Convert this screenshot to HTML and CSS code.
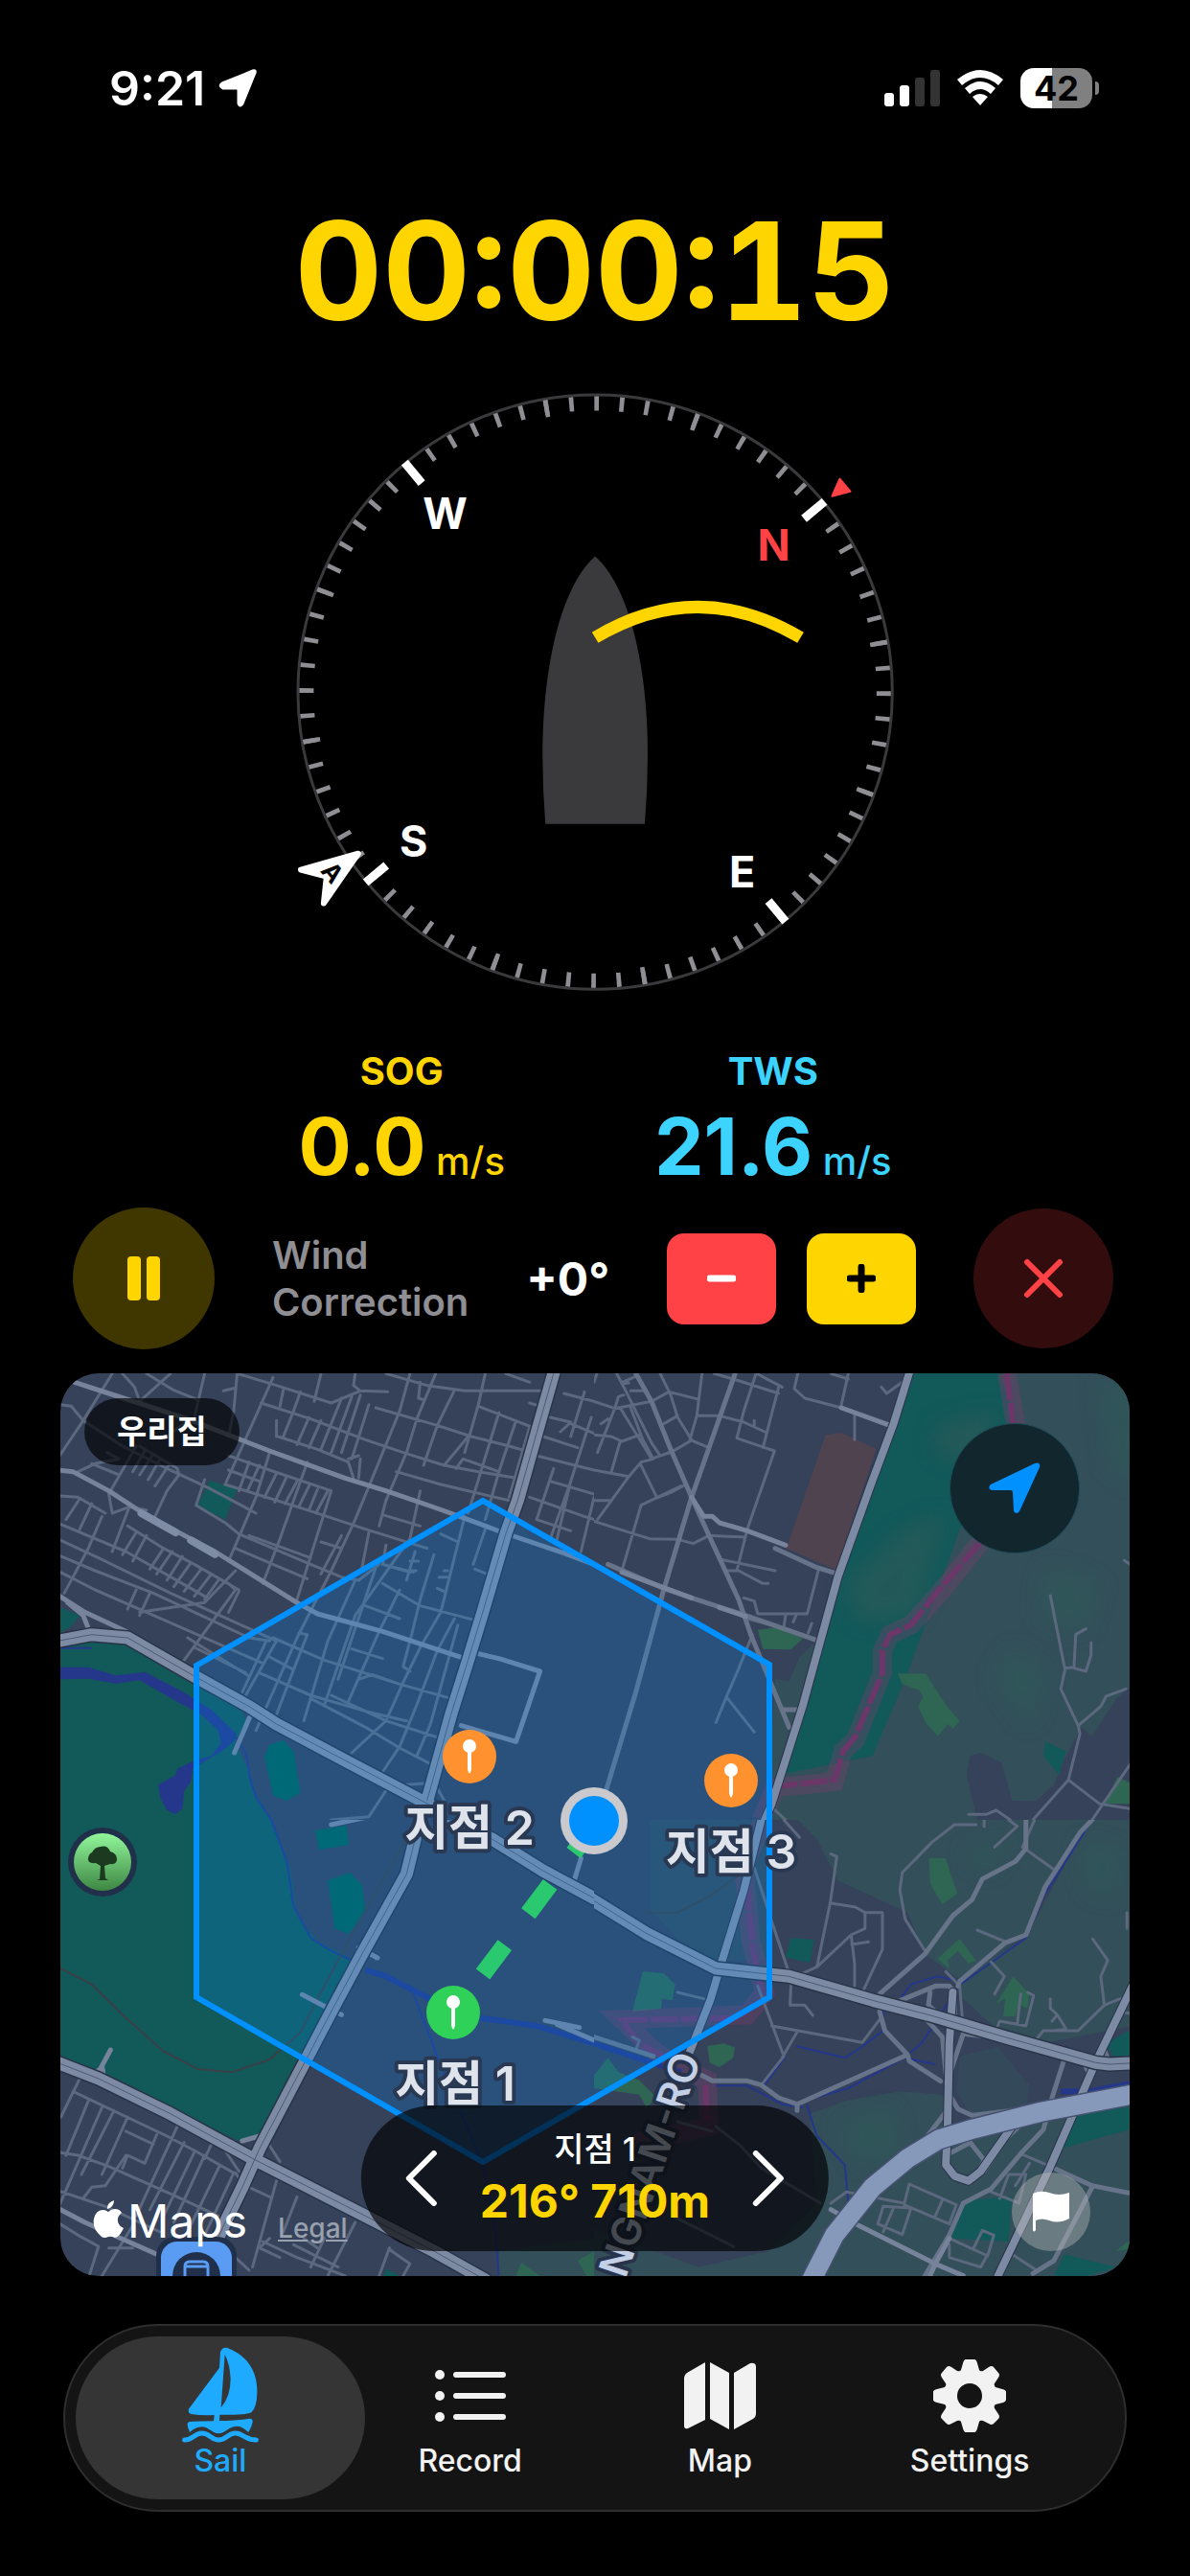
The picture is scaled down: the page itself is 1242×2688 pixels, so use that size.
FILE: index.html
```
<!DOCTYPE html>
<html lang="ko">
<head>
  <meta charset="UTF-8" />
  <meta name="viewport" content="width=device-width, initial-scale=1.0"/>
  <title>Sail</title>
  <link rel="stylesheet" href="styles.css">
</head>
<body>
  <header class="status-bar">
    <div class="status-left">
      <span class="clock">9:21</span>
      <svg class="icon-gps" viewBox="0 0 40 40"><path d="M36 2Q39 1 38 4L25 36Q22.500 40 21 36V22Q21 20 19 20H5Q0 18 4 15Z"/></svg>
    </div>
    <div class="status-right">
      <svg class="icon-signal" viewBox="0 0 58 38">
        <rect x="0" y="24" width="10" height="14" rx="3"/>
        <rect x="16" y="16" width="10" height="22" rx="3"/>
        <rect class="off" x="32" y="8" width="10" height="30" rx="3"/>
        <rect class="off" x="48" y="0" width="10" height="38" rx="3"/>
      </svg>
      <svg class="icon-wifi" viewBox="0 0 50 38">
        <path d="M1 10Q25 -10 49 10L44 16Q25 0 6 16Z"/>
        <path d="M9 19Q25 5 41 19L36 25Q25 15 14 25Z"/>
        <path d="M17 28Q25 22 33 28L25 37Z"/>
      </svg>
      <div class="battery"><span>42</span></div>
    </div>
  </header>

  <main>
    <h1 class="timer">00:00:15</h1>

    <svg class="compass" viewBox="-330 -330 660 660">
      <circle class="ring" r="311"/>
      <g transform="rotate(50.300)">
        <circle class="tick" r="302" pathLength="360" stroke-dasharray="0.900 4.100" stroke-dashoffset="0.450"/>
        <circle class="tick tick-long" r="301" pathLength="360" stroke-dasharray="0.900 29.100" stroke-dashoffset="0.450"/>
        <path class="tick-main" d="M0 -312V-284M0 312V284M-312 0H-284M312 0H284"/>
      </g>
      <path class="boat" d="M0 -142C-38 -108 -55 -20 -55 65Q-55 102 -52 138H52Q55 102 55 65C55 -20 38 -108 0 -142Z"/>
      <path class="wind-arc" d="M0 -57Q107 -121 215 -57"/>
      <path class="north-mark" d="M256 -223L267 -210L248 -205Z"/>
      <text x="-157" y="-171">W</text>
      <text class="north" x="187" y="-138">N</text>
      <text x="-190" y="172">S</text>
      <text x="154" y="204">E</text>
      <path class="wind-mark" d="M-248 169L-308 186L-281 193L-284 221Z"/>
      <text class="wind-letter" transform="translate(-275 189) rotate(50)" y="9">A</text>
    </svg>

    <section class="speeds">
      <div class="speed sog">
        <h2>SOG</h2>
        <p><b>0.0</b> <span>m/s</span></p>
      </div>
      <div class="speed tws">
        <h2>TWS</h2>
        <p><b>21.6</b> <span>m/s</span></p>
      </div>
    </section>

    <section class="controls">
      <button class="round pause" type="button" aria-label="Pause">
        <svg viewBox="0 0 36 46"><rect x="1" width="14" height="46" rx="4"/><rect x="21" width="14" height="46" rx="4"/></svg>
      </button>
      <p class="correction-label">Wind<br>Correction</p>
      <output class="correction">+0°</output>
      <div class="steppers">
        <button class="step minus" type="button" aria-label="Decrease">
          <svg viewBox="0 0 30 30"><path d="M3 15H27"/></svg>
        </button>
        <button class="step plus" type="button" aria-label="Increase">
          <svg viewBox="0 0 30 30"><path d="M3 15H27M15 3V27"/></svg>
        </button>
      </div>
      <button class="round stop" type="button" aria-label="Stop">
        <svg viewBox="0 0 42 42"><path d="M4 4L38 38M38 4L4 38"/></svg>
      </button>
    </section>

    <section class="map">
      <svg class="map-canvas" viewBox="0 0 1116 942" preserveAspectRatio="xMidYMid slice">
        <defs>
          <linearGradient id="treeFill" x1="0" y1="0" x2="0" y2="1">
            <stop offset="0" stop-color="#92f79b"/>
            <stop offset="1" stop-color="#3d8743"/>
          </linearGradient>
          <filter id="soft" x="-50%" y="-50%" width="200%" height="200%"><feGaussianBlur stdDeviation="30"/></filter>
          <g id="pinGlyph">
            <circle cy="-11" r="7"/>
            <path d="M-2 -6H2L2 13Q0 22 -2 13Z"/>
          </g>
        </defs>
        <rect class="land" width="1116" height="942"/>

        <!-- north west tile -->
        <svg x="-3" y="-14" width="560" height="480" viewBox="0 0 1568 1440" preserveAspectRatio="none">
          <path class="park" d="M0 895L100 885L205 890L400 1010L540 1100L552 1130L520 1195L560 1290L575 1350L625 1440H0Z"/>
          <path class="park" d="M445 377L525 405L490 500L410 455ZM0 770L65 800L40 835L0 860Z"/>
          <path class="park-bright" d="M620 1205L660 1190L692 1230L709 1355L670 1380L630 1365L605 1240Z"/>
          <path class="water" d="M0 962L90 962L170 988L255 977L360 1035L450 1095L522 1170L515 1195L480 1225L440 1250L395 1280L390 1320L370 1350L365 1405L345 1422L320 1410L300 1370L295 1330L345 1300L350 1280L400 1255L450 1240L478 1200L470 1160L420 1110L350 1070L240 1003L170 1013L90 998L0 1000Z"/>
          <path class="stream" d="M520 1180Q560 1230 560 1300L580 1370L625 1440M8 902H100"/>
          <g class="streets">
            <path d="M160 43L75 190L0 310M8 140L40 145L75 190M190 43L225 85L240 130L330 43M260 43L340 95L410 125M430 43L400 180M525 43L515 160L500 240M485 97L520 88"/>
            <path d="M75 190L190 270L320 340L440 400L580 480M145 290L180 310L110 325L60 350M100 325L180 360M230 270L155 410M255 285L220 350M280 295L240 360M300 310L265 375M325 330L285 395M240 270L350 340L355 360L320 410L285 490M430 375L405 455L490 510L530 545L740 640L830 680L880 690L940 640M320 240L380 190"/>
            <path d="M630 55L490 390M660 95L650 145M710 100L690 160M770 43L750 130M525 43L640 80L800 135L885 97L965 100M870 43L865 80L885 97M1030 43L1000 160L920 370L870 500L800 660L700 870L580 1160"/>
            <path d="M595 135L740 185L900 250L1010 290L1130 330L1230 350L1340 370M645 240L760 280L850 320M830 120L770 280M860 115L800 290M885 110L830 290M910 140L860 310M690 160L660 240M735 180L700 265M770 190L735 275M640 190L640 240"/>
            <path d="M930 150L1110 205L1210 240L1320 270L1385 290M960 43L1080 80L1190 97H1410M1060 70L1055 120L1070 125M1105 43L1050 185L1020 290L960 440M1160 95L1110 205L1070 330M1250 43L1230 140L1190 290M1230 145L1385 210M1310 43L1380 70M1290 165L1240 340L1200 480M1340 190L1290 350L1250 500M1380 210L1320 430"/>
            <path d="M1200 240L1130 330M1165 340L1185 310L1290 350M500 345L590 380M500 300L620 345L800 410M490 390L730 470L900 530L1080 590M560 320L530 410M590 330L555 410M640 355L605 430M670 365L635 445M700 380L665 450M735 395L705 460M760 405L735 470M790 410L755 480M620 290L580 430L500 630M850 320L865 370M885 310L880 370M880 300L850 310"/>
            <path d="M730 320L650 560L600 700M800 410L700 750M990 350L1120 390L1320 440M950 485L1060 520M1060 410L1030 560L870 800L780 1080M770 570L830 590M520 590L630 640L730 685M560 550L740 620M830 550L770 670M910 540L890 650M960 580L950 640L1030 665M960 440L940 520"/>
            <path d="M0 425L60 430L140 480M65 435L25 500M100 450L65 530M0 510L200 600L430 740M150 420L160 480L210 460L260 470M210 460L160 600M130 490L90 590L20 730M205 520L250 550L310 590L400 640L530 720M230 540L190 610M260 550L220 630M310 590L270 655M335 600L290 670M365 615L320 690M390 635L340 710M420 655L370 725M450 670L400 740M470 690L430 750M500 700L520 720L370 940M530 725L500 790"/>
            <path d="M0 560L120 620L330 730L640 880M0 610L110 660L280 730L560 870L620 880M0 660L110 720L260 790L600 950M270 730L240 800M230 720L205 780M520 660L430 760L240 790M380 870L560 990M400 900L550 980"/>
            <path d="M610 880L540 1040M640 880L550 1050M620 930L690 970M590 980L740 1050L900 1100L1020 1130M630 870L780 940L1000 1015L1150 1060M705 855L730 860L690 970L640 1110M950 640L1040 665M950 700L1060 770L1220 815M1190 490L1120 790L1060 900L1010 1010L960 1130L860 1230M1000 720L940 850L850 1070M900 770L1000 810M860 905L950 935M1100 610L1060 750L1035 860L1010 960L1030 975M1045 600L1020 690M870 690L790 880L720 1130M1160 810L1110 910L1050 1080L1000 1210L950 1290M880 1000L920 985L1000 1015M800 1050L900 1100L960 1130L1120 1185M740 1060L900 1150L1000 1215L1100 1270M1250 530L1215 640M1220 655L1255 670M1170 830L1090 1140L1050 1240M1120 545L1170 570M1130 660H1140M1115 680H1140M1110 715L1130 725M1030 630H1055M1020 660H1048M930 650L820 1000"/>
            <path d="M1440 180L1500 195L1470 225M1420 240L1520 275M1568 130L1480 105M1568 230L1500 200M1540 100L1500 240M1400 300L1568 345M1560 180L1500 380L1460 560M1440 380L1568 420M1380 430L1540 490L1568 500M1400 500L1500 535M1450 340L1400 500M1500 380L1440 560M1568 430L1530 600M1380 135L1410 145"/>
            <path d="M965 1340L910 1430L800 1440M1020 1330L1080 1325M1110 1340L1130 1380"/>
          </g>
          <g class="avenues">
            <path d="M50 70L150 105L380 185L620 285L840 370L960 410L1110 465L1200 500L1300 540L1480 605L1568 640"/>
            <path d="M0 345L45 350L150 410L250 480L345 535L460 600L700 760L760 795M1230 920L1290 935L1410 975L1340 1195L1180 1145M565 1110L517 1230M0 735L80 790L200 850M30 760L75 800L90 840"/>
            <path d="M760 795L950 850L1190 935"/>
          </g>
          <path class="lane-wide" d="M245 480L345 540M390 565L460 608"/>
          <g class="major-case"><path id="nwA" d="M1453 30L1400 230L1345 440L1310 545L1240 800L1200 940L1150 1110L1080 1380"/><path id="nwB" d="M0 880L100 860L205 870L400 990L560 1085L640 1140L860 1265L1100 1400"/></g>
          <g class="major"><use href="#nwA"/><use href="#nwB"/></g>
          <g class="divider"><use href="#nwA"/><use href="#nwB"/></g>
        </svg>

        <!-- north east tile -->
        <svg x="557" y="-14" width="570" height="480" viewBox="0 0 1568 1440" preserveAspectRatio="none">
          <path class="hill" d="M900 43H1568V1440H490L500 1330L520 1000L560 1005L590 930L640 880Z"/>
          <path class="park" d="M900 43H1160L1215 180L1050 530L950 830L900 980L800 1240L530 1300L600 1080L700 680L800 350Z"/>
          <g class="hill-shade" filter="url(#soft)">
            <path d="M900 520L1010 480L930 800L760 820L720 700Z"/><path d="M980 200L1160 150L1120 340L980 300Z"/>
            <path d="M1450 60L1568 90V400L1480 330ZM1300 640L1450 700L1400 860L1280 800ZM1200 900L1300 980L1250 1150L1150 1000Z"/>
          </g>
          <path class="land" d="M1080 1240L1110 1230L1170 1260L1200 1380L1270 1380L1320 1330L1350 1250L1400 1150L1430 1180L1500 1060L1568 1000V1440H1100L1070 1300Z"/>
          <path class="grass" d="M470 845L520 838L600 872L565 907L485 905ZM872 982H952L1010 1080L1050 1130L1030 1155L1015 1140L988 1178L955 1140L930 1085L945 1055L935 1035L885 1015ZM1503 1305L1568 1340V1390H1465Z"/>
          <path class="park" d="M1295 1195L1355 1225L1335 1300L1290 1240Z"/>
          <path class="school" d="M665 235L710 228L810 278L695 658L552 590Z"/>
          <path class="border-glow" d="M1185 43L1210 200L1110 570L1000 720L910 830L850 860L828 910V980L750 1190L715 1225L690 1320L520 1340L480 1440"/>
          <path class="border-line" d="M1185 43L1203 200M1110 570L990 720L910 830L850 860L828 910V980L750 1180L715 1225L690 1315L520 1335"/>
          <g class="streets">
            <path d="M8 43L0 70M65 43L90 95L165 260L190 300L220 290L280 252L330 275M80 70L125 50M80 75L100 72M105 97H140M0 130L60 152L165 130L215 100L295 122M85 110L70 115L60 150L10 290M75 150L165 310L215 290M20 200L40 185M0 235L50 240L80 255L130 235M75 255L50 350M105 150L140 250L170 310L135 320L100 365L0 345M100 365L10 500M135 330L180 430M190 43L220 110L240 180L280 250M240 175L200 200M310 43L295 175L275 250M295 175H360"/>
            <path d="M360 175L430 195L490 225M345 43L400 60L530 105M465 43L430 160L410 245L490 275L518 285L440 530L410 660M460 190V205M530 85L485 275M585 43L575 90L605 120L710 150L840 205M730 43L708 150M748 165V250M470 45L540 85M680 43L730 60M825 85L840 105L885 70M0 440L45 440M180 432L220 415L255 395M135 455L250 395M135 455L80 660M0 505L115 545L160 560L240 562L285 575L330 550L435 555M365 625L520 660M380 660H415L485 700H500M430 745L460 755L470 795H612L645 655M550 800L545 835M580 800L572 820M625 825L615 855"/>
            <path d="M455 860L410 980L380 1055L350 1135M380 1055L460 1165M510 1400L550 1440M440 810L560 845L640 878M1310 738L1352 970L1340 1030L1390 1145L1395 1170L1362 1315L1260 1440M1352 965L1378 962L1383 860L1412 842M1378 965L1412 975L1427 925V885M1390 1145L1455 1085L1470 1053L1527 1030M1362 1315L1452 1390L1568 1410M1568 1220L1430 1440M1075 1423H1125L1155 1410L1195 1440M1522 628L1568 660"/>
          </g>
          <g class="avenues slim">
            <path d="M120 43L165 130L220 280L280 430L330 550L415 750L450 860L560 1150M405 43L280 430L200 720L120 1040L20 1400M40 640L200 715L280 745L435 800L640 878M520 590L640 650L700 670M545 1095H590"/>
          </g>
          <g class="avenues"><path d="M280 430L315 490H340L360 510L440 535L550 580M80 665L280 745M360 775L435 803M710 150L850 205"/></g>
          <g class="major-case mid"><path id="neA" d="M908 30L860 200L795 390L700 680L600 1080L510 1390L490 1440"/></g>
          <g class="major mid"><use href="#neA"/></g>
        </svg>

        <!-- south west tile -->
        <svg x="-3" y="466" width="560" height="490" viewBox="0 0 1568 1470" preserveAspectRatio="none">
          <path class="park" d="M0 0H625L680 150L700 300L760 380L860 435L800 600L590 990L530 1005L0 740Z"/>
          <path class="park-bright" d="M752 33L845 17L851 78L765 94ZM790 190L855 165L890 205L900 290L850 357L810 340Z"/>
          <path class="hill" d="M1290 1350L1568 1310V1470H1290Z"/>
          <path class="grass" d="M1355 1385L1410 1427L1390 1470L1340 1427ZM1520 1380L1568 1350V1470Z"/>
          <path class="park" d="M960 1405L1000 1427V1470H940Z"/>
          <path class="stream" d="M625 0L670 130L690 270L740 370L800 410L860 440M1040 545L1110 740L1240 1070L1275 1240L1290 1427"/>
          <path class="stream wide" d="M900 470L960 490L1060 545L1090 560M1235 620L1400 645L1568 700"/>
          <path class="rail" d="M0 460L100 515L190 610L310 725L410 780L510 790L620 750L710 665L770 540L890 300L1020 60"/>
          <g class="streets">
            <path d="M65 810L10 930M90 880L25 1050M130 900L0 1220M45 850L320 990L400 1035L515 1105M165 910L70 1110M205 930L130 1110M290 985L255 1075L205 1050L190 1090M200 975L280 1015M350 960L230 1240M370 1010L270 1220M400 1040L310 1240M430 1050L340 1260M475 1080L380 1290M515 1105L430 1300M0 1040L60 1050L150 1085L350 1180L470 1240M0 1160L140 1210L300 1290M75 1185L100 1150L140 1145L200 1050M0 1260L60 1300L120 1335L80 1470M150 1340H220M220 1270L130 1427M450 1015L430 1060M520 1105L530 1120"/>
            <path d="M620 1310L590 1340L650 1370M640 1130L570 1400M560 1150L620 1180M520 1370L560 1410M870 1260L790 1427M690 1330L820 1400M700 1180L660 1290M720 1310L760 1340M780 1310L740 1400M600 1320L700 1370L840 1427M970 1340L940 1427M970 1345L1030 1390L1010 1427M620 1020L650 1070M480 1020L530 1100"/>
          </g>
          <g class="avenues">
            <path d="M155 720L125 780L100 800M130 770L135 800M0 1215L80 1260L290 1360M715 547L800 595L830 610M880 400L935 432M800 15L910 -10M1425 628L1525 650M1530 120L1510 190M1510 0L1530 20M1460 640L1568 690M540 1005L590 990"/>
          </g>
          <g class="major-case"><path id="swA" d="M1045 60L1020 170L890 420L800 600L590 1030L540 1150L490 1260L400 1470"/><path id="swB" d="M0 760L120 810L330 920L570 1060L900 1240L1100 1350L1250 1440"/><path id="swC" d="M1060 -40L1270 60L1420 160L1568 245"/></g>
          <g class="major"><use href="#swA"/><use href="#swB"/><use href="#swC"/></g>
          <g class="divider"><use href="#swA"/><use href="#swB"/><use href="#swC"/></g>
        </svg>

        <!-- south east tile -->
        <svg x="557" y="466" width="570" height="490" viewBox="0 0 1568 1470" preserveAspectRatio="none">
          <path class="hill" d="M585 0H1430L1300 200L1240 360L1050 500L950 420L900 290L700 190L640 60ZM1040 500L1240 370L1420 0H1568V640L1290 700L1150 650L1060 560ZM620 920L720 880L880 850L1000 860L1030 1000L1200 960L1380 880H1568V1470H0V1280L300 1400L500 1350L640 1200Z"/>
          <path class="hill dim" d="M160 0H500V440H300L160 280ZM1050 740L1160 710L1250 830L1240 900L1080 920L1040 850Z"/>
          <g class="hill-shade" filter="url(#soft)"><path d="M700 950L850 900L880 1050L760 1080ZM1400 60L1520 100L1490 250L1420 220ZM1060 100L1200 60L1130 170Z"/></g>
          <path class="grass" d="M962 120H1010L1025 175L1044 230L1000 265L965 200ZM985 435L1050 372L1097 440L1075 450L1045 410L1015 440L1020 465ZM1155 575L1203 490L1250 545L1245 590L1220 580L1210 615H1175L1180 560ZM325 708L372 700L404 712L400 745L360 775L332 760ZM0 800L40 745L70 790L130 815L180 870L150 900L130 860L0 840ZM140 475L200 480L233 515L225 565L195 560L193 592L110 600ZM1568 1290L1497 1350L1568 1340Z"/>
          <path class="park" d="M565 370L632 375L620 447L550 430ZM1370 930L1568 890V960L1340 1030ZM1060 1190L1200 1180L1190 1320L1025 1310ZM1470 700L1568 640V740L1490 740ZM1350 1360L1500 1400L1420 1427H1320Z"/>
          <path class="border-glow" d="M485 0L430 150L450 380L490 540L440 610L80 625L180 730L260 780L325 815L330 960L120 1010"/>
          <path class="border-line" d="M440 200L455 400L485 560L410 620L80 627L130 700L200 740M320 830L325 940"/>
          <path class="stream" d="M1430 0L1290 240L1240 370L1045 520L1000 600L940 700L890 745L980 765M1045 505L985 490L910 515L880 560L830 600V660L770 710L720 745L580 708M600 880L730 840L890 745M610 890L640 990L720 1080L730 1200M350 832H440L540 890L600 900M550 740L490 830"/>
          <path class="stream wide" d="M0 700L110 740L250 790M1340 850H1420L1568 820"/>
          <path class="rail" d="M150 290H240L330 240L420 170"/>
          <g class="streets">
            <path d="M680 107L697 115L678 260L640 460L600 480M678 260L750 273L778 290H828V405L775 530M778 290V340L738 360L640 460M738 360L748 450V520M740 390L788 382M460 150L520 350L560 480M565 520L563 580H605L628 612M470 520L545 740L480 830M510 645L770 697L820 625M585 660L540 745M545 0L590 55M240 540L315 560M110 680L130 690L122 715"/>
            <path d="M1097 15H1035L970 70L885 165L878 220L893 310L950 410M1120 0V20M1190 0L1215 20L1150 85M1265 0L1230 85L1320 155M1100 345L1178 380M1140 445L1178 490L1150 545M1010 475L1050 520L1058 630M1432 373L1475 440L1455 490L1465 580L1390 660H1290L1260 700M1465 580L1510 560M1310 560V590L1330 610L1355 655L1320 660M1330 610L1315 630M1225 545L1215 640L1165 630L1155 655M1245 540L1262 550L1240 645L1215 640M1500 600L1568 610M1530 290V340"/>
            <path d="M350 960L420 1020L480 1090L650 1200M240 945L340 975M225 1240L400 1335M680 1200L725 1165L890 1200M905 1140L1040 1205L1020 1265L890 1205ZM980 1240L1000 1190M830 1210L815 1265L885 1298L910 1215ZM860 1215L830 1290M1130 1160L1220 1200L1240 1110L1190 1110L1165 1185M1225 1045L1310 1085M1250 1075L1210 1145M1020 1310L1130 1365L1148 1300L1115 1285L1090 1340M1020 1330V1370L1110 1400L1130 1360M1200 1360L1270 1410"/>
          </g>
          <g class="avenues slim">
            <path d="M1430 0L1395 40L1295 210L1240 360L1180 385L1050 505L1045 520M1240 90L1210 130L1115 185L1085 250L1030 300L950 420L820 545M1240 0V90M310 800L340 817H440L480 830L530 870L583 890L900 735L905 755L995 818M583 890V910M820 600L835 660L900 735M1350 750L1315 870L1290 970L1225 1045L1140 1155L1060 1200L1020 1300L950 1427M1310 1085L1430 1145L1568 1175M1430 1150L1320 1380L1260 1420"/>
            <path d="M880 565L980 520H1020L1035 540V620M965 540L960 580L1000 620M950 620L1000 680L1015 850L1045 905L1085 925L1200 910M1060 670L1150 680M1060 670L1020 800V900L950 1000L890 1040M1010 1050L1080 1010L1120 1065L1100 1110M1220 960L1180 1000L1120 1100M1400 750L1420 790M1465 720L1480 760M0 680L170 740"/>
          </g>
          <g class="avenues"><path d="M680 1220L760 1270L980 1390L1060 1427M980 1390L1020 1310M965 1427L980 1390"/></g>
          <g class="major-case mid"><path id="seC" d="M480 0L430 220L365 450L335 560L270 740M1568 470L1440 760L1310 1085L1160 1427M1030 540L1020 700L1015 960L1010 1080L1035 1115L1075 1130L1110 1100L1200 960"/></g>
          <g class="major mid"><use href="#seC"/></g>
          <g class="major-case"><path id="seA" d="M-20 240L150 355L350 465L560 490L800 565L960 610L1180 680L1440 760L1480 765L1568 760"/></g>
          <g class="major"><use href="#seA"/></g>
          <g class="divider"><use href="#seA"/></g>
          <path class="motorway-case" d="M1568 855L1280 915L1080 970L990 1000L900 1060L800 1150L690 1300L620 1450"/>
          <path class="motorway" d="M1568 855L1280 915L1080 970L990 1000L900 1060L800 1150L690 1300L620 1450"/>
        </svg>

        <text class="street-name" transform="translate(669 715) rotate(-71)">NGNAM-RO</text>
        <path class="zone" d="M441 133L740 304V651L441 823L142 651V305Z"/>
        <path class="course" d="M441 627L557 472"/>

        <g class="place" transform="translate(44 510)">
          <circle class="place-ring" r="36"/>
          <circle r="30" fill="url(#treeFill)"/>
          <path d="M-3 18L-2 4L-7 1Q-16 2 -15 -4Q-14 -9 -11 -10Q-8 -16 -2 -16Q5 -18 8 -11Q15 -9 15 -3Q15 3 8 2L2 4L3 17L6 19H-6Z"/>
        </g>
        <g transform="translate(142 942)">
          <rect class="shop-ring" x="-42" y="-41" width="84" height="84" rx="20"/>
          <rect class="shop" x="-37" y="-36" width="74" height="74" rx="17"/>
          <circle class="shop-ring" r="25"/>
          <path class="shop-phone" d="M-12 8V-10Q-12 -15 -7 -15H7Q12 -15 12 -10V8M-12 -10H12"/>
        </g>

        <g class="pin next" transform="translate(410 667)"><circle r="28"/><use href="#pinGlyph"/><text x="2" y="92">지점 1</text></g>
        <g class="pin" transform="translate(427 400)"><circle r="28"/><use href="#pinGlyph"/><text y="92">지점 2</text></g>
        <g class="pin" transform="translate(700 425)"><circle r="28"/><use href="#pinGlyph"/><text y="92">지점 3</text></g>
        <circle class="me-ring" cx="557" cy="467" r="35"/>
        <circle class="me" cx="557" cy="467" r="26"/>
      </svg>

      <div class="map-title">우리집</div>
      <button class="locate" type="button" aria-label="Locate">
        <svg viewBox="0 0 54 54"><path d="M48 1Q54 -1 53 5L32 51Q29 55 26 51L25 31Q25 29 23 29H3Q-2 27 2 23Z"/></svg>
      </button>
      <div class="map-credit">
        <svg viewBox="0 0 32 40"><path d="M22 1Q22 8 15 10Q14 4 22 1ZM16 13Q19 10 23 10Q28 10 30 14Q25 18 26 23Q27 28 32 30Q28 39 23 40Q20 38 16 39Q12 41 9 39Q-1 31 1 20Q3 11 11 11Q13 11 16 13Z"/></svg>
        <span>Maps</span>
        <a href="#legal">Legal</a>
      </div>
      <div class="waypoint">
        <button type="button" aria-label="Previous"><svg viewBox="0 0 34 58"><path d="M30 3L4 29L30 55"/></svg></button>
        <div class="waypoint-info">
          <span>지점 1</span>
          <strong>216° 710m</strong>
        </div>
        <button type="button" aria-label="Next"><svg viewBox="0 0 34 58"><path d="M4 3L30 29L4 55"/></svg></button>
      </div>
      <button class="flag" type="button" aria-label="Flag">
        <svg viewBox="0 0 40 44"><path d="M1 3Q9 -1 18 2Q28 6 39 2V29Q28 35 18 31Q10 28 4 31V41Q2 44 1 41Z"/></svg>
      </button>
    </section>
  </main>

  <nav class="tabs">
    <a class="active" href="#sail">
      <svg viewBox="388 96 240 298">
        <path d="M508 110Q515 94 530 98C600 125 625 180 623 240Q622 285 605 300Q590 309 506 307L505 326Q570 325 600 319Q610 319 609 330Q607 345 596 362Q570 338 550 345C530 350 520 366 502 366C484 366 470 345 450 345Q430 346 412 362Q404 345 405 334Q407 328 420 328L487 327L489 308Q450 310 416 305Q404 300 410 288L505 160ZM522 118L510 285Q540 250 540 195Q538 150 522 118Z"/>
        <path class="wave" d="M396 386C425 386 425 365 450 365C475 365 480 386 502 386C528 386 530 365 555 365C580 365 585 386 620 386"/>
      </svg>
      <span>Sail</span>
    </a>
    <a href="#record">
      <svg viewBox="0 0 80 80">
        <circle cx="8" cy="20" r="5"/><circle cx="8" cy="42" r="5"/><circle cx="8" cy="64" r="5"/>
        <path class="lines" d="M25 20H74M25 42H74M25 64H74"/>
      </svg>
      <span>Record</span>
    </a>
    <a href="#map">
      <svg viewBox="0 0 80 80">
        <path d="M3 23Q3 20 6 18L25 7V67L7 76Q3 77 3 73ZM30 7L50 18V77L30 66ZM55 18L72 8Q78 7 78 12V61Q78 64 75 66L55 77Z"/>
      </svg>
      <span>Map</span>
    </a>
    <a href="#settings">
      <svg viewBox="0 0 80 80">
        <path fill-rule="evenodd" d="M33 8Q34 4 36 4H45Q47 4 48 8L50 15Q51 17 54 16L60 12Q63 10 65 12L70 18Q72 20 70 23L66 29Q65 31 67 33L74 35Q78 36 78 38V46Q78 48 75 49L67 51Q65 52 66 55L70 61Q72 64 70 66L65 71Q63 73 60 71L54 68Q51 67 50 69L48 76Q47 80 45 80H36Q34 80 33 76L31 69Q30 67 27 68L21 71Q18 73 16 71L11 66Q9 64 11 61L15 55Q16 52 14 51L6 49Q2 48 2 46V38Q2 36 6 35L14 33Q16 31 15 29L11 23Q9 20 11 18L16 12Q18 10 21 12L27 16Q30 17 31 15ZM40 29A13 13 0 1 0 40 55A13 13 0 1 0 40 29Z"/>
      </svg>
      <span>Settings</span>
    </a>
  </nav>
</body>
</html>
```
FILE: styles.css
```
* {
  box-sizing: border-box;
}

body {
  margin: 0;
  background: #000;
  color: #fff;
  font-family: Inter, "Noto Sans CJK KR", sans-serif;
}

h1, h2, p {
  margin: 0;
}

button {
  border: none;
  padding: 0;
  display: flex;
  align-items: center;
  justify-content: center;
  cursor: pointer;
}

/* status bar */
.status-bar {
  display: flex;
  justify-content: space-between;
  align-items: center;
  height: 184px;
  padding: 0 95px 0 114px;
}

.status-left,
.status-right {
  display: flex;
  align-items: center;
}

.status-left {
  gap: 14px;
}

.status-right {
  gap: 17px;
}

.clock {
  font-size: 50px;
  font-weight: 600;
}

.status-bar svg {
  fill: #fff;
}

.icon-gps {
  width: 40px;
  height: 40px;
  stroke: #fff;
  stroke-width: 3;
  stroke-linejoin: round;
}

.icon-signal {
  width: 58px;
  height: 38px;
}

.icon-signal .off {
  fill: #333;
}

.icon-wifi {
  width: 50px;
  height: 38px;
}

.battery {
  position: relative;
  width: 75px;
  height: 42px;
  margin-right: 7px;
  border-radius: 14px;
  background: linear-gradient(to right, #fff 44%, #808080 44%);
  color: #000;
  font-size: 36px;
  font-weight: 700;
  line-height: 42px;
  text-align: center;
}

.battery::after {
  content: "";
  position: absolute;
  right: -7px;
  top: 14px;
  width: 4px;
  height: 14px;
  border-radius: 0 4px 4px 0;
  background: #808080;
}

/* timer and compass */
.timer {
  color: #ffd500;
  font-size: 142px;
  font-weight: 700;
  line-height: 168px;
  margin-top: 14px;
  text-align: center;
  font-variant-numeric: tabular-nums;
}

.compass {
  display: block;
  width: 53%;
  min-width: 300px;
  margin: 27px auto 0;
  max-width: 660px;
}

.ring {
  fill: none;
  stroke: #3a3a3c;
  stroke-width: 3;
}

.tick {
  fill: none;
  stroke: #8e8e93;
  stroke-width: 15;
}

.tick-long {
  stroke-width: 18;
}

.tick-main {
  stroke: #fff;
  stroke-width: 9;
}

.boat {
  fill: #3a3a3c;
}

.wind-arc {
  fill: none;
  stroke: #ffd500;
  stroke-width: 13;
}

.north-mark {
  fill: #ff4245;
  stroke: #ff4245;
  stroke-width: 2;
  stroke-linejoin: round;
}

.compass text {
  fill: #fff;
  font-size: 45px;
  font-weight: 700;
  text-anchor: middle;
}

.compass .north {
  fill: #ff4245;
}

.wind-mark {
  fill: #fff;
  stroke: #fff;
  stroke-width: 6;
  stroke-linejoin: round;
}

.compass .wind-letter {
  fill: #000;
  font-size: 26px;
}

/* speeds */
.speeds {
  display: flex;
  justify-content: center;
  gap: 156px;
  margin-top: 43px;
}

.speed {
  text-align: center;
}

.speed h2 {
  font-size: 40px;
  font-weight: 700;
  line-height: 48px;
}

.speed p {
  line-height: 80px;
  margin-top: 15px;
  white-space: nowrap;
}

.speed b {
  font-size: 82px;
  font-weight: 700;
}

.speed span {
  margin-left: 6px;
  font-size: 40px;
  font-weight: 500;
}

.sog {
  color: #ffd500;
}

.tws {
  color: #3cd3ff;
}

/* controls */
.controls {
  display: flex;
  align-items: center;
  justify-content: space-between;
  padding: 0 80px 0 76px;
}

.round {
  width: 148px;
  height: 148px;
  border-radius: 50%;
}

.pause {
  background: #403600;
}

.pause svg {
  width: 36px;
  fill: #ffd500;
}

.stop {
  width: 146px;
  height: 146px;
  background: #330d0e;
}

.stop svg {
  width: 42px;
  stroke: #ff4245;
  stroke-width: 6;
  stroke-linecap: round;
}

.correction-label {
  color: #8e8e93;
  font-size: 40px;
  font-weight: 600;
  line-height: 49px;
}

.correction {
  font-size: 48px;
  font-weight: 700;
}

.steppers {
  display: flex;
  gap: 32px;
}

.step {
  width: 114px;
  height: 95px;
  border-radius: 18px;
}

.step svg {
  width: 30px;
  stroke-width: 7;
  stroke-linecap: round;
}

.minus {
  background: #ff4245;
}

.minus svg {
  stroke: #fff;
}

.plus {
  background: #ffd500;
}

.plus svg {
  stroke: #000;
}

/* map */
.map {
  position: relative;
  margin: 25px 63px 0;
  aspect-ratio: 1116 / 942;
  border-radius: 40px;
  overflow: hidden;
}

.map-canvas {
  display: block;
  width: 100%;
  height: 100%;
}

.map-canvas path {
  vector-effect: non-scaling-stroke;
}

.land {
  fill: #35425a;
}

.park {
  fill: #12595a;
}

.park-bright {
  fill: #005f56;
}

.hill {
  fill: #334f5a;
}

.hill.dim {
  opacity: 0.5;
}

.hill-shade {
  fill: #2f5a58;
  opacity: 0.6;
}

.grass {
  fill: #2f6553;
}

.school {
  fill: #504350;
}

.water {
  fill: #24378a;
}

.stream {
  fill: none;
  stroke: #24378a;
  stroke-width: 2;
}

.stream.wide {
  stroke-width: 6;
}

.rail {
  fill: none;
  stroke: #3a4047;
  stroke-width: 2;
}

.border-glow {
  fill: none;
  stroke: #8a3a70;
  stroke-opacity: 0.3;
  stroke-width: 20;
}

.border-line {
  fill: none;
  stroke: #6a3768;
  stroke-width: 6;
  stroke-dasharray: 28 3;
}

.streets,
.avenues,
.major-case,
.major,
.divider,
.lane-wide {
  fill: none;
  stroke-linecap: round;
  stroke-linejoin: round;
}

.streets {
  stroke: #5c687e;
  stroke-width: 3;
}

.avenues {
  stroke: #76839b;
  stroke-width: 5;
}

.avenues.slim {
  stroke: #667389;
}

.lane-wide {
  stroke: #7f8ca5;
  stroke-width: 8;
}

.major-case {
  stroke: #283347;
  stroke-width: 16;
}

.major-case.mid {
  stroke-width: 10;
}

.major {
  stroke: #7d8aa4;
  stroke-width: 13;
}

.major.mid {
  stroke-width: 8;
}

.divider {
  stroke: #4d5a72;
  stroke-width: 1;
}

.motorway-case {
  fill: none;
  stroke: #465270;
  stroke-width: 23;
}

.motorway {
  fill: none;
  stroke: #8799bb;
  stroke-width: 20;
}

.street-name {
  fill: #c3d0e6;
  stroke: #28344b;
  stroke-width: 8;
  stroke-linejoin: round;
  paint-order: stroke;
  font-size: 42px;
  font-weight: 600;
  text-anchor: end;
}

.zone {
  fill: rgba(0, 145, 255, 0.2);
  stroke: #0091ff;
  stroke-width: 6;
}

.course {
  fill: none;
  stroke: #2ac970;
  stroke-width: 18;
  stroke-dasharray: 38 41;
}

.place {
  fill: #1c3a20;
}

.place-ring,
.shop-ring {
  fill: #20304a;
}

.shop {
  fill: #5a9bf4;
}

.shop-phone {
  fill: none;
  stroke: #5a9bf4;
  stroke-width: 3;
}

.pin {
  fill: #fff;
}

.pin > circle {
  fill: #ff922f;
}

.pin.next > circle {
  fill: #30d158;
}

.pin text {
  fill: #dfe4ec;
  stroke: #2a3953;
  stroke-width: 8;
  stroke-linejoin: round;
  paint-order: stroke;
  font-size: 50px;
  font-weight: 600;
  text-anchor: middle;
}

.me-ring {
  fill: #c9c9ce;
}

.me {
  fill: #0091ff;
}

/* controls lying over the map */
.map-title {
  position: absolute;
  left: 25px;
  top: 26px;
  padding: 0 34px;
  border-radius: 35px;
  background: rgba(0, 0, 0, 0.65);
  font-size: 34px;
  font-weight: 600;
  line-height: 70px;
}

.locate {
  position: absolute;
  right: 52px;
  top: 52px;
  width: 136px;
  height: 136px;
  border: 1px solid #1d4a57;
  border-radius: 50%;
  background: #12262e;
}

.locate svg {
  width: 54px;
  fill: #0091ff;
}

.map-credit {
  position: absolute;
  left: 34px;
  bottom: 20px;
  display: flex;
  align-items: baseline;
  font-size: 48px;
  font-weight: 400;
  line-height: 60px;
}

.map-credit svg {
  width: 32px;
  margin-right: 4px;
  fill: #fff;
}

.map-credit a {
  margin-left: 32px;
  color: #99a1ae;
  font-size: 28px;
  font-weight: 500;
}

.waypoint {
  position: absolute;
  left: 50%;
  bottom: 26px;
  transform: translateX(-50%);
  display: flex;
  align-items: center;
  gap: 44px;
  height: 152px;
  padding: 0 46px;
  border-radius: 76px;
  background: rgba(0, 0, 0, 0.65);
}

.waypoint button {
  background: none;
}

.waypoint button svg {
  width: 34px;
  fill: none;
  stroke: #fff;
  stroke-width: 6;
  stroke-linecap: round;
  stroke-linejoin: round;
}

.waypoint-info {
  display: flex;
  flex-direction: column;
  align-items: center;
  white-space: nowrap;
}

.waypoint-info span {
  font-size: 34px;
  font-weight: 500;
  line-height: 48px;
}

.waypoint-info strong {
  color: #ffd500;
  font-size: 48px;
  font-weight: 700;
  line-height: 60px;
}

.flag {
  position: absolute;
  right: 41px;
  bottom: 26px;
  width: 82px;
  height: 82px;
  border-radius: 50%;
  background: rgba(190, 190, 190, 0.4);
}

.flag svg {
  width: 40px;
  fill: #fff;
}

/* tab bar */
.tabs {
  display: flex;
  margin: 50px 66px 66px;
  padding: 11px;
  border: 2px solid #2e2e2e;
  border-radius: 98px;
  background: #141414;
}

.tabs a {
  flex: 1;
  display: flex;
  flex-direction: column;
  align-items: center;
  justify-content: flex-end;
  height: 170px;
  padding-bottom: 21px;
  border-radius: 85px;
  color: #f2f2f2;
  fill: #f2f2f2;
  font-size: 32px;
  font-weight: 500;
  line-height: 38px;
  text-decoration: none;
}

.tabs a + a {
  margin-left: -41px;
}

.tabs .active {
  background: #353535;
  color: #1eabff;
  fill: #1eabff;
}

.tabs svg {
  width: 80px;
  height: 80px;
  margin-bottom: 11px;
}

.tabs .active svg {
  height: 100px;
  margin-bottom: 0;
}

.tabs .wave {
  fill: none;
  stroke: #1eabff;
  stroke-width: 15;
  stroke-linecap: round;
}

.tabs .lines {
  fill: none;
  stroke: #f2f2f2;
  stroke-width: 6;
  stroke-linecap: round;
}
```
